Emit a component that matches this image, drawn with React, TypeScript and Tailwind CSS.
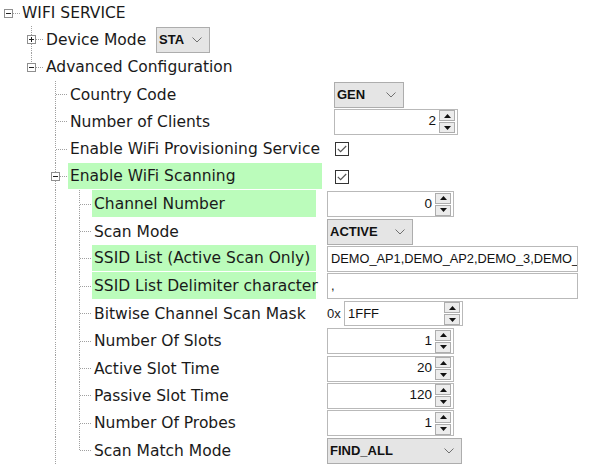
import React from "react";

type Ctrl =
  | { type: "combo"; value: string; w: string }
  | { type: "spin"; value: string; w: string }
  | { type: "check" }
  | { type: "text"; value: string }
  | { type: "hex"; value: string };

type Row = {
  label: string;
  level: number;
  box?: "minus" | "plus";
  last?: boolean;
  green?: boolean;
  cont?: boolean[];
  control?: Ctrl;
};

const rows: Row[] = [
  { label: "WIFI SERVICE", level: 0, box: "minus" },
  { label: "Device Mode", level: 1, box: "plus", control: { type: "combo", value: "STA", w: "w-[54px]" } },
  { label: "Advanced Configuration", level: 1, box: "minus", last: true },
  { label: "Country Code", level: 2, cont: [false], control: { type: "combo", value: "GEN", w: "w-[70px]" } },
  { label: "Number of Clients", level: 2, cont: [false], control: { type: "spin", value: "2", w: "w-[124px]" } },
  { label: "Enable WiFi Provisioning Service", level: 2, cont: [false], control: { type: "check" } },
  { label: "Enable WiFi Scanning", level: 2, box: "minus", green: true, cont: [false], control: { type: "check" } },
  { label: "Channel Number", level: 3, green: true, cont: [false, true], control: { type: "spin", value: "0", w: "w-[127px]" } },
  { label: "Scan Mode", level: 3, cont: [false, true], control: { type: "combo", value: "ACTIVE", w: "w-[86px]" } },
  { label: "SSID List (Active Scan Only)", level: 3, green: true, cont: [false, true], control: { type: "text", value: "DEMO_AP1,DEMO_AP2,DEMO_3,DEMO_4" } },
  { label: "SSID List Delimiter character", level: 3, green: true, cont: [false, true], control: { type: "text", value: "," } },
  { label: "Bitwise Channel Scan Mask", level: 3, cont: [false, true], control: { type: "hex", value: "1FFF" } },
  { label: "Number Of Slots", level: 3, cont: [false, true], control: { type: "spin", value: "1", w: "w-[127px]" } },
  { label: "Active Slot Time", level: 3, cont: [false, true], control: { type: "spin", value: "20", w: "w-[127px]" } },
  { label: "Passive Slot Time", level: 3, cont: [false, true], control: { type: "spin", value: "120", w: "w-[127px]" } },
  { label: "Number Of Probes", level: 3, cont: [false, true], control: { type: "spin", value: "1", w: "w-[127px]" } },
  { label: "Scan Match Mode", level: 3, last: true, cont: [false, true], control: { type: "combo", value: "FIND_ALL", w: "w-[135px]" } },
];

const heights = [26, 27, 28, 27, 27, 28, 27, 28, 27, 27, 28, 27, 28, 27, 27, 28, 27];
const hClass: Record<number, string> = { 26: "h-[26px]", 27: "h-[27px]", 28: "h-[28px]" };

const LINE = "#a0a0a0";

function Cell({
  w,
  cx,
  h,
  up,
  down,
  right,
  box,
}: {
  w: number;
  cx: number;
  h: number;
  up?: boolean;
  down?: boolean;
  right?: boolean;
  box?: "minus" | "plus";
}) {
  const cy = Math.floor(h / 2);
  const x = cx + 0.5;
  const y = cy + 0.5;
  return (
    <svg width={w} height={h} className="shrink-0 block" shapeRendering="crispEdges">
      {up && <line x1={x} y1={0} x2={x} y2={box ? cy - 4 : cy} stroke={LINE} strokeDasharray="1 1" />}
      {down && <line x1={x} y1={box ? cy + 5 : cy + 1} x2={x} y2={h} stroke={LINE} strokeDasharray="1 1" />}
      {right && <line x1={box ? cx + 5 : cx + 1} y1={y} x2={w} y2={y} stroke={LINE} strokeDasharray="1 1" />}
      {box && (
        <g>
          <rect x={cx - 4 + 0.5} y={cy - 4 + 0.5} width={8} height={8} fill="#fff" stroke="#8f8f8f" />
          <line x1={cx - 2} y1={y} x2={cx + 3} y2={y} stroke="#222" />
          {box === "plus" && <line x1={x} y1={cy - 2} x2={x} y2={cy + 3} stroke="#222" />}
        </g>
      )}
    </svg>
  );
}

function Chevron() {
  return (
    <svg width="10" height="6" viewBox="0 0 10 6" className="shrink-0">
      <polyline points="0.5,0.5 5,5 9.5,0.5" fill="none" stroke="#707070" strokeWidth="1" />
    </svg>
  );
}

function Arrows() {
  return (
    <div className="flex flex-col gap-[1px] mr-[2px] shrink-0">
      <div className="w-[16px] h-[11px] border border-[#adadad] bg-[#ececec] flex items-center justify-center">
        <svg width="7" height="4" viewBox="0 0 7 4">
          <polygon points="0,4 7,4 3.5,0" fill="#111" />
        </svg>
      </div>
      <div className="w-[16px] h-[11px] border border-[#adadad] bg-[#ececec] flex items-center justify-center">
        <svg width="7" height="4" viewBox="0 0 7 4">
          <polygon points="0,0 7,0 3.5,4" fill="#111" />
        </svg>
      </div>
    </div>
  );
}

const ctlFont = "font-['Liberation_Sans',Arial,sans-serif] text-[#111]";

function Control({ c }: { c: Ctrl }) {
  if (c.type === "combo") {
    return (
      <div
        className={`${c.w} h-[26px] flex items-center justify-between bg-[#e5e5e5] border border-[#adadad] pl-[2px] pr-[7px] ${ctlFont} font-bold text-[13px]`}
      >
        <span>{c.value}</span>
        <Chevron />
      </div>
    );
  }
  if (c.type === "spin") {
    return (
      <div className={`${c.w} h-[26px] flex items-center bg-white border border-[#b9b9b9] ${ctlFont} text-[13.5px]`}>
        <span className="flex-1 text-right pr-[3px]">{c.value}</span>
        <Arrows />
      </div>
    );
  }
  if (c.type === "check") {
    return (
      <div className="ml-[1px] w-[14px] h-[14px] border border-[#333] bg-white flex items-center justify-center">
        <svg width="10" height="8" viewBox="0 0 10 8">
          <polyline points="0.8,3.8 3.6,6.6 9.2,1" fill="none" stroke="#555" strokeWidth="1.2" />
        </svg>
      </div>
    );
  }
  if (c.type === "text") {
    return (
      <div
        className={`w-[251px] h-[26px] flex items-center bg-white border border-[#b9b9b9] overflow-hidden whitespace-nowrap pl-[3px] ${ctlFont} text-[12.8px]`}
      >
        {c.value}
      </div>
    );
  }
  return (
    <div className={`flex items-center ${ctlFont} text-[13px] text-[#222]`}>
      <span className="w-[17px]">0x</span>
      <div className="w-[119px] h-[25px] flex items-center bg-white border border-[#b9b9b9]">
        <span className="flex-1 pl-[3px] text-[#111]">{c.value}</span>
        <Arrows />
      </div>
    </div>
  );
}

export default function App() {
  return (
    <div className="w-[609px] h-[467px] bg-white overflow-hidden font-['DejaVu_Sans',Verdana,sans-serif] text-[15.5px] text-[#1a1a1a]">
      {rows.map((r, i) => {
        const h = heights[i];
        const cells: React.ReactNode[] = [];
        if (r.level === 0) {
          cells.push(<Cell key="c0" w={20} cx={8} h={h} right box={r.box} />);
        } else {
          cells.push(<Cell key="c0" w={20} cx={8} h={h} />);
          for (let a = 1; a < r.level; a++) {
            const on = r.cont ? r.cont[a - 1] : false;
            cells.push(<Cell key={"a" + a} w={24} cx={11} h={h} up={on} down={on} />);
          }
          cells.push(<Cell key="own" w={24} cx={11} h={h} up down={!r.last} right box={r.box} />);
        }
        const labelW =
          r.level === 1 ? "w-[112px]" : r.level === 2 ? "w-[254px]" : r.level === 3 ? "w-[224px]" : "";
        const gap = r.level === 2 ? "ml-[12px]" : r.level === 3 ? "ml-[11px]" : "";
        return (
          <div key={i} className={`flex items-stretch ${hClass[h]}`}>
            {cells}
            <div
              className={`flex items-center shrink-0 whitespace-nowrap pl-[2px] pt-[2px] ${labelW} ${
                r.green ? "bg-[#bbfcbb] mb-px" : ""
              }`}
            >
              {r.label}
            </div>
            {r.control && (
              <div className={`flex items-center ${gap}`}>
                <Control c={r.control} />
              </div>
            )}
          </div>
        );
      })}
    </div>
  );
}
